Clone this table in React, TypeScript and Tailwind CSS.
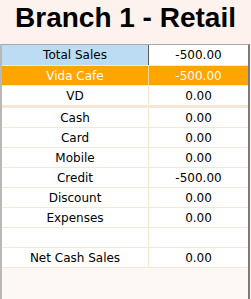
import React from "react"

interface SummaryRow {
  label: string
  value: string
  kind?: "current" | "branch" | "blank"
  thickBottom?: boolean
}

const rows: SummaryRow[] = [
  { label: "Total Sales", value: "-500.00", kind: "current" },
  { label: "Vida Cafe", value: "-500.00", kind: "branch" },
  { label: "VD", value: "0.00", thickBottom: true },
  { label: "Cash", value: "0.00" },
  { label: "Card", value: "0.00" },
  { label: "Mobile", value: "0.00" },
  { label: "Credit", value: "-500.00" },
  { label: "Discount", value: "0.00" },
  { label: "Expenses", value: "0.00" },
  { label: "", value: "", kind: "blank" },
  { label: "Net Cash Sales", value: "0.00" },
]

function Row({ row }: { row: SummaryRow }) {
  // the VD row closes the branch block with a heavier line
  const bottom = row.thickBottom ? "h-[22px] border-b-[3px]" : "h-[20px] border-b"

  if (row.kind === "current") {
    return (
      <div className="flex h-[21px] border-b border-[#f6e6d4]">
        <div className="w-[147px] bg-[#bbdcf2] border-r border-[#5a5a5a] flex items-center justify-center">
          {row.label}
        </div>
        <div className="flex-1 bg-white flex items-center justify-center">{row.value}</div>
      </div>
    )
  }

  if (row.kind === "branch") {
    return (
      <div className={`flex ${bottom} border-[#f6e6d4] bg-[#ffa500] text-white`}>
        <div className="w-[147px] border-r border-[#fbd79a] flex items-center justify-center">
          {row.label}
        </div>
        <div className="flex-1 flex items-center justify-center">{row.value}</div>
      </div>
    )
  }

  return (
    <div className={`flex ${bottom} border-[#f6e6d4] bg-white`}>
      <div className="w-[147px] border-r border-[#f6e6d4] flex items-center justify-center">
        {row.label}
      </div>
      <div className="flex-1 flex items-center justify-center">{row.value}</div>
    </div>
  )
}

export default function App() {
  return (
    <div className="h-screen w-[251px] flex flex-col bg-[#fdf2ee] font-['DejaVu_Sans',sans-serif] text-black">
      <div className="h-[44px] flex items-start justify-center">
        <h1 className="text-[28px] leading-[36px] font-bold font-['Liberation_Sans',sans-serif]">
          Branch 1 - Retail
        </h1>
      </div>

      <div className="flex-1 mr-[1px] border-t border-l-2 border-r-2 border-t-[#a8a8a8] border-l-[#b8b8b8] border-r-[#7a7a7a] bg-[#fdf7f5] text-[12px]">
        {rows.map((row, i) => (
          <Row key={i} row={row} />
        ))}
      </div>
    </div>
  )
}
